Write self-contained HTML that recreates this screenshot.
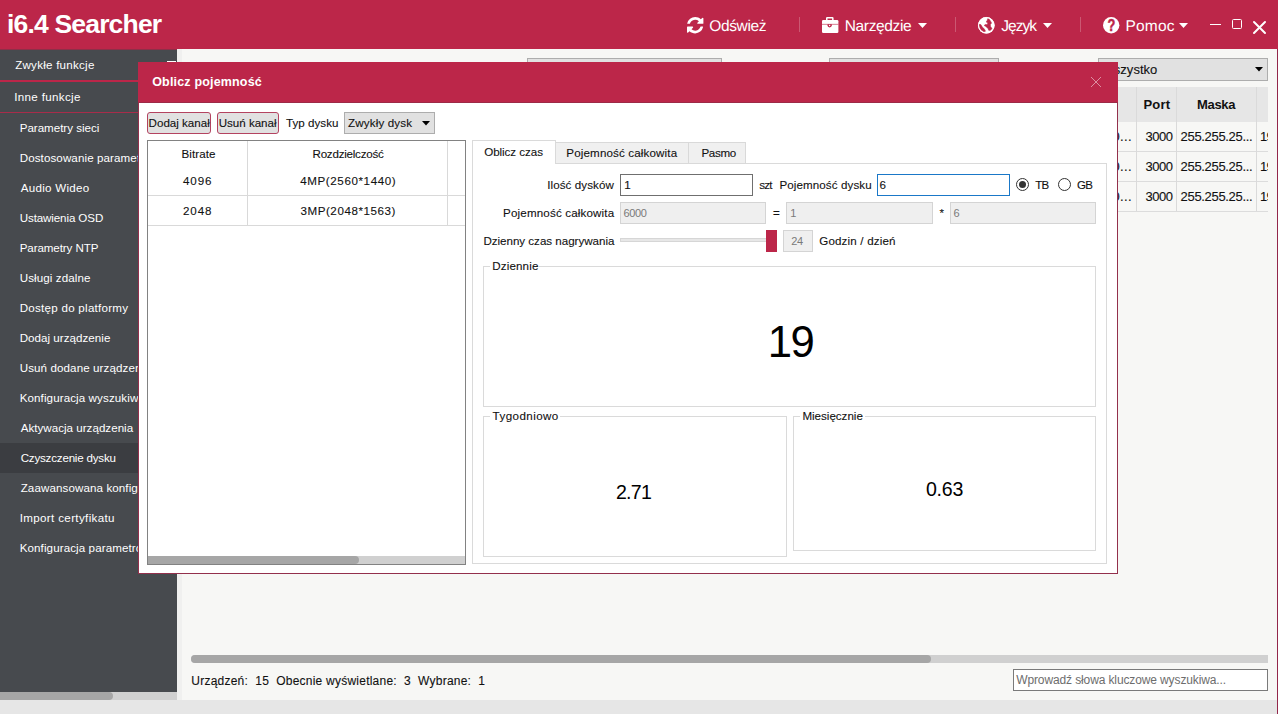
<!DOCTYPE html>
<html lang="pl">
<head>
<meta charset="utf-8">
<title>i6.4 Searcher</title>
<style>
*{box-sizing:border-box;margin:0;padding:0}
html,body{width:1278px;height:714px;overflow:hidden}
body{position:relative;background:#f7f7f5;font-family:"Liberation Sans",sans-serif;font-size:12px;color:#111}
.a{position:absolute}
.t{position:absolute;white-space:nowrap}
.k{-webkit-text-stroke:0.1px currentColor}
svg{position:absolute;overflow:visible}
.dis{background:#efefef;border:1px solid #d4d4d4}
.fs{border:1px solid #dadada}
.gap{background:#fff;height:1px}
</style>
</head>
<body>

<!-- ===== main window content (behind dialog) ===== -->
<div class="a" style="left:527px;top:58px;width:195px;height:23px;background:#e1e1e1;border:1px solid #adadad"></div>
<div class="a" style="left:829px;top:58px;width:170px;height:23px;background:#e1e1e1;border:1px solid #adadad"></div>
<div class="a" style="left:1098px;top:58px;width:170px;height:23px;background:#e1e1e1;border:1px solid #adadad"></div>
<svg style="left:1254.500px;top:66.700px" width="8" height="4.500" viewBox="0 0 8 4.500"><path d="M0 0h8L4 4.500z" fill="#000"/></svg>
<!-- device table -->
<div class="a" style="left:191px;top:87px;width:1077px;height:35px;background:#e6e6e6"></div>
<div class="a" style="left:191px;top:151px;width:1077px;height:1px;background:#dcdcdc"></div>
<div class="a" style="left:191px;top:181px;width:1077px;height:1px;background:#dcdcdc"></div>
<div class="a" style="left:191px;top:211px;width:1077px;height:1px;background:#dcdcdc"></div>
<div class="a" style="left:1136px;top:87px;width:1px;height:124px;background:#dadada"></div>
<div class="a" style="left:1176px;top:87px;width:1px;height:124px;background:#dadada"></div>
<div class="a" style="left:1256px;top:87px;width:1px;height:124px;background:#dadada"></div>
<!-- horizontal scrollbar -->
<div class="a" style="left:191px;top:655px;width:1077px;height:8px;background:#d0d0d0;border-radius:4px 0 0 4px"></div>
<div class="a" style="left:191px;top:655px;width:740px;height:8px;background:#a6a6a6;border-radius:4px"></div>
<!-- search box -->
<div class="a" style="left:1013px;top:669px;width:255px;height:22px;background:#fff;border:1px solid #7a7a7a"></div>
<div class="t k" style="left:1101.50px;top:61.00px;font-size:13px;line-height:17px;letter-spacing:0.031px;color:#111;">Wszystko</div>
<div class="t" style="left:1143.50px;top:96.00px;font-size:13px;line-height:17px;letter-spacing:0.176px;color:#111;font-weight:bold;">Port</div>
<div class="t" style="left:1196.90px;top:96.00px;font-size:13px;line-height:17px;letter-spacing:-0.280px;color:#111;font-weight:bold;">Maska</div>
<div class="t k" style="left:1112.50px;top:128.00px;font-size:13px;line-height:17px;letter-spacing:0.349px;color:#111;">0...</div>
<div class="t k" style="left:1145.50px;top:128.00px;font-size:13px;line-height:17px;letter-spacing:-0.463px;color:#111;">3000</div>
<div class="t k" style="left:1180.60px;top:128.00px;font-size:13px;line-height:17px;letter-spacing:-0.324px;color:#111;">255.255.25...</div>
<div class="t k" style="left:1260.10px;top:128.00px;font-size:13px;line-height:17px;letter-spacing:-0.730px;color:#111;width:8px;overflow:hidden;">192</div>
<div class="t k" style="left:1112.50px;top:158.00px;font-size:13px;line-height:17px;letter-spacing:0.349px;color:#111;">0...</div>
<div class="t k" style="left:1145.50px;top:158.00px;font-size:13px;line-height:17px;letter-spacing:-0.463px;color:#111;">3000</div>
<div class="t k" style="left:1180.60px;top:158.00px;font-size:13px;line-height:17px;letter-spacing:-0.324px;color:#111;">255.255.25...</div>
<div class="t k" style="left:1260.10px;top:158.00px;font-size:13px;line-height:17px;letter-spacing:-0.730px;color:#111;width:8px;overflow:hidden;">192</div>
<div class="t k" style="left:1112.50px;top:188.00px;font-size:13px;line-height:17px;letter-spacing:0.349px;color:#111;">0...</div>
<div class="t k" style="left:1145.50px;top:188.00px;font-size:13px;line-height:17px;letter-spacing:-0.463px;color:#111;">3000</div>
<div class="t k" style="left:1180.60px;top:188.00px;font-size:13px;line-height:17px;letter-spacing:-0.324px;color:#111;">255.255.25...</div>
<div class="t k" style="left:1260.10px;top:188.00px;font-size:13px;line-height:17px;letter-spacing:-0.730px;color:#111;width:8px;overflow:hidden;">192</div>
<div class="t k" style="left:191.30px;top:673.00px;font-size:12px;line-height:16px;letter-spacing:0.233px;color:#111;">Urządzeń:&nbsp; 15&nbsp; Obecnie wyświetlane:&nbsp; 3&nbsp; Wybrane:&nbsp; 1</div>
<div class="t" style="left:1016.20px;top:672.00px;font-size:12px;line-height:16px;letter-spacing:-0.118px;color:#6d6d6d;">Wprowadź słowa kluczowe wyszukiwa...</div>

<!-- ===== sidebar ===== -->
<div class="a" style="left:177px;top:49px;width:5px;height:651px;background:#f0f0ef"></div>
<div class="a" style="left:0;top:48px;width:177px;height:644px;background:#474a4e"></div>
<div class="a" style="left:0;top:80px;width:177px;height:2px;background:#bc2649"></div>
<div class="a" style="left:0;top:112px;width:177px;height:1px;background:#a82c4a"></div>
<div class="a" style="left:0;top:443px;width:177px;height:30px;background:#3b3d41"></div>
<div class="a" style="left:167px;top:61px;width:9px;height:1px;background:#fff"></div>
<div class="t" style="left:15.20px;top:57.00px;font-size:11.6px;line-height:16px;letter-spacing:0.240px;color:#fff;">Zwykłe funkcje</div>
<div class="t" style="left:14.20px;top:89.00px;font-size:11.6px;line-height:16px;letter-spacing:0.339px;color:#fff;">Inne funkcje</div>
<div class="t" style="left:19.70px;top:120.00px;font-size:11.6px;line-height:16px;letter-spacing:-0.022px;color:#fff;">Parametry sieci</div>
<div class="t" style="left:19.70px;top:150.00px;font-size:11.6px;line-height:16px;letter-spacing:0.097px;color:#fff;">Dostosowanie parametrów</div>
<div class="t" style="left:20.70px;top:180.00px;font-size:11.6px;line-height:16px;letter-spacing:0.271px;color:#fff;">Audio Wideo</div>
<div class="t" style="left:19.70px;top:210.00px;font-size:11.6px;line-height:16px;letter-spacing:-0.114px;color:#fff;">Ustawienia OSD</div>
<div class="t" style="left:19.70px;top:240.00px;font-size:11.6px;line-height:16px;letter-spacing:-0.096px;color:#fff;">Parametry NTP</div>
<div class="t" style="left:19.70px;top:270.00px;font-size:11.6px;line-height:16px;letter-spacing:0.104px;color:#fff;">Usługi zdalne</div>
<div class="t" style="left:19.70px;top:300.00px;font-size:11.6px;line-height:16px;letter-spacing:0.258px;color:#fff;">Dostęp do platformy</div>
<div class="t" style="left:19.70px;top:330.00px;font-size:11.6px;line-height:16px;letter-spacing:0.028px;color:#fff;">Dodaj urządzenie</div>
<div class="t" style="left:19.70px;top:360.00px;font-size:11.6px;line-height:16px;letter-spacing:0.097px;color:#fff;">Usuń dodane urządzenie</div>
<div class="t" style="left:19.70px;top:390.00px;font-size:11.6px;line-height:16px;letter-spacing:0.097px;color:#fff;">Konfiguracja wyszukiwania</div>
<div class="t" style="left:20.70px;top:420.00px;font-size:11.6px;line-height:16px;letter-spacing:0.017px;color:#fff;">Aktywacja urządzenia</div>
<div class="t" style="left:20.70px;top:450.00px;font-size:11.6px;line-height:16px;letter-spacing:-0.208px;color:#fff;">Czyszczenie dysku</div>
<div class="t" style="left:20.70px;top:480.00px;font-size:11.6px;line-height:16px;letter-spacing:0.097px;color:#fff;">Zaawansowana konfiguracja</div>
<div class="t" style="left:19.70px;top:510.00px;font-size:11.6px;line-height:16px;letter-spacing:0.349px;color:#fff;">Import certyfikatu</div>
<div class="t" style="left:19.70px;top:540.00px;font-size:11.6px;line-height:16px;letter-spacing:0.097px;color:#fff;">Konfiguracja parametrów</div>
<!-- sidebar scrollbar -->
<div class="a" style="left:0;top:692px;width:177px;height:8px;background:#d0d0d0"></div>
<div class="a" style="left:-5px;top:692px;width:118px;height:8px;background:#a6a6a6;border-radius:4px"></div>
<!-- bottom strip -->
<div class="a" style="left:0;top:700px;width:1278px;height:14px;background:#e6e6e6"></div>
<div class="a" style="left:1277px;top:48px;width:1px;height:666px;background:#93274a"></div>

<!-- ===== header ===== -->
<div class="a" style="left:0;top:0;width:1278px;height:49px;background:#bc2649"></div>
<div class="a" style="left:0;top:49px;width:177px;height:1px;background:#8d2f48"></div>
<div class="a" style="left:799px;top:17px;width:1px;height:15px;background:#cb5872"></div>
<div class="a" style="left:955px;top:17px;width:1px;height:15px;background:#cb5872"></div>
<div class="a" style="left:1080px;top:17px;width:1px;height:15px;background:#cb5872"></div>
<!-- refresh icon -->
<svg style="left:686.900px;top:16.800px" width="16.400" height="16.400" viewBox="0 0 1536 1536"><path fill="#fff" d="M1511 928q0 5-1 7-64 268-268 434.500T764 1536q-146 0-282.500-55T238 1324l-129 129q-19 19-45 19t-45-19-19-45V960q0-26 19-45t45-19h448q26 0 45 19t19 45-19 45l-137 137q71 66 161 102t187 36q134 0 250-65t186-179q11-17 53-117 8-23 30-23h192q13 0 22.500 9.500t9.500 22.500zm25-800v448q0 26-19 45t-45 19h-448q-26 0-45-19t-19-45 19-45l138-138Q969 256 768 256q-134 0-250 65T332 500q-11 17-53 117-8 23-30 23H50q-13 0-22.500-9.500T18 608v-7q65-268 270-434.500T768 0q146 0 284 55.500T1297 212l130-129q19-19 45-19t45 19 19 45z"/></svg>
<!-- briefcase icon -->
<svg style="left:821.900px;top:17px" width="16.400" height="16" viewBox="0 0 16.400 16"><path fill="#fff" fill-rule="evenodd" d="M4 3.200V1.200Q4 0 5.200 0H10.400Q11.600 0 11.600 1.200V3.200H10.100V1.500H5.500V3.200Z"/><rect x="0" y="2.900" width="16.400" height="13.100" rx="1.300" fill="#fff"/><rect x="0" y="6.900" width="16.400" height="0.600" fill="#bc2649"/><path fill="#bc2649" d="M5.500 7.200H9.800V8.300A2.150 2.150 0 0 1 5.500 8.300Z"/><circle cx="7.650" cy="8.600" r="0.750" fill="#fff"/></svg>
<!-- carets -->
<svg style="left:918.3px;top:23px" width="9" height="5" viewBox="0 0 9 5"><path d="M0 0h9L4.500 5z" fill="#fff"/></svg>
<svg style="left:1043.3px;top:23px" width="9" height="5" viewBox="0 0 9 5"><path d="M0 0h9L4.500 5z" fill="#fff"/></svg>
<svg style="left:1179.1px;top:23px" width="9" height="5" viewBox="0 0 9 5"><path d="M0 0h9L4.500 5z" fill="#fff"/></svg>
<!-- globe icon -->
<svg style="left:977.800px;top:16.600px" width="16.600" height="16.600" viewBox="0 0 16.600 16.600"><circle cx="8.300" cy="8.300" r="8.300" fill="#fff"/><path fill="#bc2649" stroke="#bc2649" stroke-width="0.500" stroke-linejoin="round" d="M9.800 1.500L11.300 2.300L12.600 4.200L13.600 6.100L12.400 7.600L12.600 9.450L14.100 11.650L12.100 13.500L10.600 13.200L10.200 11.650L8.900 10.400L7.460 9.340L6.100 8.400L7.770 7.360L9 7.800L9.900 6.100L8.200 5L9.140 3.470zM1.060 7.360L2.830 7.570L4.300 10L6.400 12.100L7.550 14.200L5.900 14.700L3.260 13.100L1.580 10.400z"/><circle cx="8.300" cy="8.300" r="7.850" fill="none" stroke="#fff" stroke-width="0.900"/></svg>
<!-- help icon -->
<svg style="left:1102.800px;top:16.600px" width="16.400" height="16.400" viewBox="0 0 16.400 16.400"><circle cx="8.200" cy="8.200" r="8.200" fill="#fff"/><text transform="translate(8.300,14.100) scale(0.800,1)" text-anchor="middle" font-family="Liberation Sans, sans-serif" font-weight="bold" font-size="16" fill="#bc2649" stroke="#bc2649" stroke-width="0.500">?</text></svg>
<!-- window buttons -->
<div class="a" style="left:1210px;top:24px;width:11px;height:1px;background:#fff"></div>
<div class="a" style="left:1232px;top:19px;width:10px;height:10px;border:1px solid #fff;border-radius:1.500px"></div>
<svg style="left:1252.500px;top:20.700px" width="13" height="13" viewBox="0 0 13 13"><path d="M1 1L12 12M12 1L1 12" stroke="#fff" stroke-width="2" stroke-linecap="round" fill="none"/></svg>
<div class="t" style="left:7.10px;top:7.00px;font-size:26.5px;line-height:35px;letter-spacing:-0.833px;color:#fff;font-weight:bold;">i6.4 Searcher</div>
<div class="t" style="left:709.30px;top:16.00px;font-size:15.5px;line-height:21px;letter-spacing:-0.381px;color:#fff;text-rendering:geometricPrecision;">Odśwież</div>
<div class="t" style="left:844.70px;top:16.00px;font-size:15.5px;line-height:21px;letter-spacing:-0.345px;color:#fff;text-rendering:geometricPrecision;">Narzędzie</div>
<div class="t" style="left:1001.30px;top:16.00px;font-size:15.5px;line-height:21px;letter-spacing:-0.993px;color:#fff;text-rendering:geometricPrecision;">Język</div>
<div class="t" style="left:1125.50px;top:16.00px;font-size:15.5px;line-height:21px;letter-spacing:0.177px;color:#fff;text-rendering:geometricPrecision;">Pomoc</div>

<!-- ===== dialog ===== -->
<div class="a" style="left:138px;top:62px;width:980px;height:512px;background:#fff;border:1px solid #93304c"></div>
<div class="a" style="left:138px;top:62px;width:980px;height:41px;background:#bc2649;border-bottom:1px solid #9c2a47"></div>
<svg style="left:1091px;top:77px" width="10" height="10" viewBox="0 0 10 10"><path d="M0 0L10 10M10 0L0 10" stroke="#dd8fa2" stroke-width="1" fill="none"/></svg>
<!-- buttons -->
<div class="a" style="left:147px;top:112px;width:64px;height:22px;background:#e1e1e1;border:1px solid #b44360;border-radius:3px"></div>
<div class="a" style="left:217px;top:112px;width:62px;height:22px;background:#e1e1e1;border:1px solid #b44360;border-radius:3px"></div>
<div class="a" style="left:344px;top:112px;width:91px;height:22px;background:#e1e1e1;border:1px solid #adadad"></div>
<svg style="left:422px;top:121px" width="8" height="4.500" viewBox="0 0 8 4.500"><path d="M0 0h8L4 4.500z" fill="#000"/></svg>
<!-- channel table -->
<div class="a" style="left:147px;top:140px;width:319px;height:425px;background:#fff;border:1px solid #828282"></div>
<div class="a" style="left:148px;top:195px;width:317px;height:1px;background:#d9d9d9"></div>
<div class="a" style="left:148px;top:225px;width:317px;height:1px;background:#d9d9d9"></div>
<div class="a" style="left:247px;top:141px;width:1px;height:85px;background:#d9d9d9"></div>
<div class="a" style="left:447px;top:141px;width:1px;height:85px;background:#d9d9d9"></div>
<div class="a" style="left:148px;top:556px;width:317px;height:8px;background:#d0d0d0"></div>
<div class="a" style="left:144px;top:556px;width:215px;height:8px;background:#a6a6a6;border-radius:4px;clip-path:inset(0 0 0 4px)"></div>
<!-- tabs -->
<div class="a" style="left:472px;top:163px;width:635px;height:401px;border:1px solid #dadada"></div>
<div class="a" style="left:555px;top:142px;width:134px;height:22px;background:#f0f0f0;border:1px solid #d9d9d9"></div>
<div class="a" style="left:688px;top:142px;width:58px;height:22px;background:#f0f0f0;border:1px solid #d9d9d9"></div>
<div class="a" style="left:472px;top:140px;width:84px;height:24px;background:#fff;border:1px solid #dadada;border-bottom:none"></div>
<div class="a" style="left:473px;top:163px;width:82px;height:1px;background:#fff"></div>
<!-- row 1 -->
<div class="a" style="left:620px;top:174px;width:133px;height:22px;background:#fff;border:1px solid #6f6f6f"></div>
<div class="a" style="left:877px;top:174px;width:133px;height:22px;background:#fff;border:1px solid #1a78c8"></div>
<div class="a" style="left:1016px;top:178px;width:13px;height:13px;border-radius:50%;background:#fff;border:1px solid #333"></div>
<div class="a" style="left:1019px;top:181px;width:7px;height:7px;border-radius:50%;background:#333"></div>
<div class="a" style="left:1058px;top:178px;width:13px;height:13px;border-radius:50%;background:#fff;border:1px solid #333"></div>
<!-- row 2 -->
<div class="a dis" style="left:620px;top:202px;width:146px;height:22px"></div>
<div class="a dis" style="left:786px;top:202px;width:147px;height:22px"></div>
<div class="a dis" style="left:950px;top:202px;width:146px;height:22px"></div>
<!-- row 3 -->
<div class="a" style="left:620px;top:238px;width:147px;height:4px;background:#e7e7e7;border:1px solid #d6d6d6"></div>
<div class="a" style="left:766px;top:230px;width:11px;height:22px;background:#bc2649"></div>
<div class="a dis" style="left:783px;top:230px;width:30px;height:22px"></div>
<!-- group boxes -->
<div class="a fs" style="left:483px;top:266px;width:613px;height:141px"></div>
<div class="a gap" style="left:490px;top:266px;width:49px"></div>
<div class="a fs" style="left:483px;top:416px;width:304px;height:141px"></div>
<div class="a gap" style="left:490px;top:416px;width:70px"></div>
<div class="a fs" style="left:793px;top:416px;width:303px;height:135px"></div>
<div class="a gap" style="left:800px;top:416px;width:65px"></div>
<div class="t" style="left:152.20px;top:74.00px;font-size:12.5px;line-height:17px;letter-spacing:0.173px;color:#fff;font-weight:bold;">Oblicz pojemność</div>
<div class="t k" style="left:148.60px;top:115.00px;font-size:11.6px;line-height:16px;letter-spacing:-0.005px;color:#111;">Dodaj kanał</div>
<div class="t k" style="left:218.70px;top:115.00px;font-size:11.6px;line-height:16px;letter-spacing:-0.014px;color:#111;">Usuń kanał</div>
<div class="t k" style="left:285.90px;top:115.00px;font-size:11.6px;line-height:16px;letter-spacing:0.044px;color:#111;">Typ dysku</div>
<div class="t k" style="left:348.10px;top:115.00px;font-size:11.6px;line-height:16px;letter-spacing:0.142px;color:#111;">Zwykły dysk</div>
<div class="t k" style="left:181.60px;top:146.00px;font-size:11.6px;line-height:16px;letter-spacing:0.040px;color:#111;">Bitrate</div>
<div class="t k" style="left:312.50px;top:146.00px;font-size:11.6px;line-height:16px;letter-spacing:-0.233px;color:#111;">Rozdzielczość</div>
<div class="t k" style="left:183.10px;top:173.00px;font-size:11.6px;line-height:16px;letter-spacing:0.819px;color:#111;">4096</div>
<div class="t k" style="left:300.20px;top:173.00px;font-size:11.6px;line-height:16px;letter-spacing:0.600px;color:#111;">4MP(2560*1440)</div>
<div class="t k" style="left:183.10px;top:203.00px;font-size:11.6px;line-height:16px;letter-spacing:0.819px;color:#111;">2048</div>
<div class="t k" style="left:300.40px;top:203.00px;font-size:11.6px;line-height:16px;letter-spacing:0.570px;color:#111;">3MP(2048*1563)</div>
<div class="t k" style="left:484.20px;top:144.00px;font-size:11.6px;line-height:16px;letter-spacing:-0.047px;color:#111;">Oblicz czas</div>
<div class="t k" style="left:566.30px;top:145.00px;font-size:11.6px;line-height:16px;letter-spacing:0.144px;color:#111;">Pojemność całkowita</div>
<div class="t k" style="left:701.50px;top:145.00px;font-size:11.6px;line-height:16px;letter-spacing:-0.359px;color:#111;">Pasmo</div>
<div class="t k" style="left:547.30px;top:177.00px;font-size:11.6px;line-height:16px;letter-spacing:0.069px;color:#111;">Ilość dysków</div>
<div class="t k" style="left:624.30px;top:177.00px;font-size:11.6px;line-height:16px;letter-spacing:0.000px;color:#111;">1</div>
<div class="t k" style="left:759.30px;top:177.00px;font-size:11.6px;line-height:16px;letter-spacing:-0.812px;color:#111;">szt</div>
<div class="t k" style="left:779.40px;top:177.00px;font-size:11.6px;line-height:16px;letter-spacing:0.099px;color:#111;">Pojemność dysku</div>
<div class="t k" style="left:879.50px;top:177.00px;font-size:11.6px;line-height:16px;letter-spacing:0.000px;color:#111;">6</div>
<div class="t k" style="left:1035.20px;top:178.00px;font-size:11.5px;line-height:15px;letter-spacing:-0.805px;color:#111;">TB</div>
<div class="t k" style="left:1077.10px;top:178.00px;font-size:11.5px;line-height:15px;letter-spacing:-0.805px;color:#111;">GB</div>
<div class="t k" style="left:503.10px;top:205.00px;font-size:11.6px;line-height:16px;letter-spacing:0.155px;color:#111;">Pojemność całkowita</div>
<div class="t" style="left:623.60px;top:206.00px;font-size:11px;line-height:15px;letter-spacing:-0.418px;color:#7a7a7a;">6000</div>
<div class="t k" style="left:773.00px;top:205.00px;font-size:11.6px;line-height:16px;letter-spacing:0.000px;color:#111;">=</div>
<div class="t" style="left:790.30px;top:206.00px;font-size:11px;line-height:15px;letter-spacing:0.000px;color:#7a7a7a;">1</div>
<div class="t k" style="left:939.40px;top:205.00px;font-size:11.6px;line-height:16px;letter-spacing:0.000px;color:#111;">*</div>
<div class="t" style="left:953.50px;top:206.00px;font-size:11px;line-height:15px;letter-spacing:0.000px;color:#7a7a7a;">6</div>
<div class="t k" style="left:483.40px;top:233.00px;font-size:11.6px;line-height:16px;letter-spacing:-0.019px;color:#111;">Dzienny czas nagrywania</div>
<div class="t" style="left:791.30px;top:234.00px;font-size:11px;line-height:15px;letter-spacing:-0.418px;color:#7a7a7a;">24</div>
<div class="t k" style="left:819.20px;top:233.00px;font-size:11.6px;line-height:16px;letter-spacing:0.172px;color:#111;">Godzin / dzień</div>
<div class="t k" style="left:492.30px;top:258.00px;font-size:11.6px;line-height:16px;letter-spacing:0.134px;color:#111;">Dziennie</div>
<div class="t k" style="left:492.60px;top:408.00px;font-size:11.6px;line-height:16px;letter-spacing:0.419px;color:#111;">Tygodniowo</div>
<div class="t k" style="left:802.40px;top:408.00px;font-size:11.6px;line-height:16px;letter-spacing:-0.012px;color:#111;">Miesięcznie</div>
<div class="t" style="left:767.70px;top:313.00px;font-size:43.7px;line-height:57px;letter-spacing:-1.497px;color:#000;">19</div>
<div class="t" style="left:615.90px;top:479.00px;font-size:19.6px;line-height:26px;letter-spacing:-0.713px;color:#000;">2.71</div>
<div class="t" style="left:925.90px;top:476.00px;font-size:19.6px;line-height:26px;letter-spacing:-0.213px;color:#000;">0.63</div>

</body>
</html>
